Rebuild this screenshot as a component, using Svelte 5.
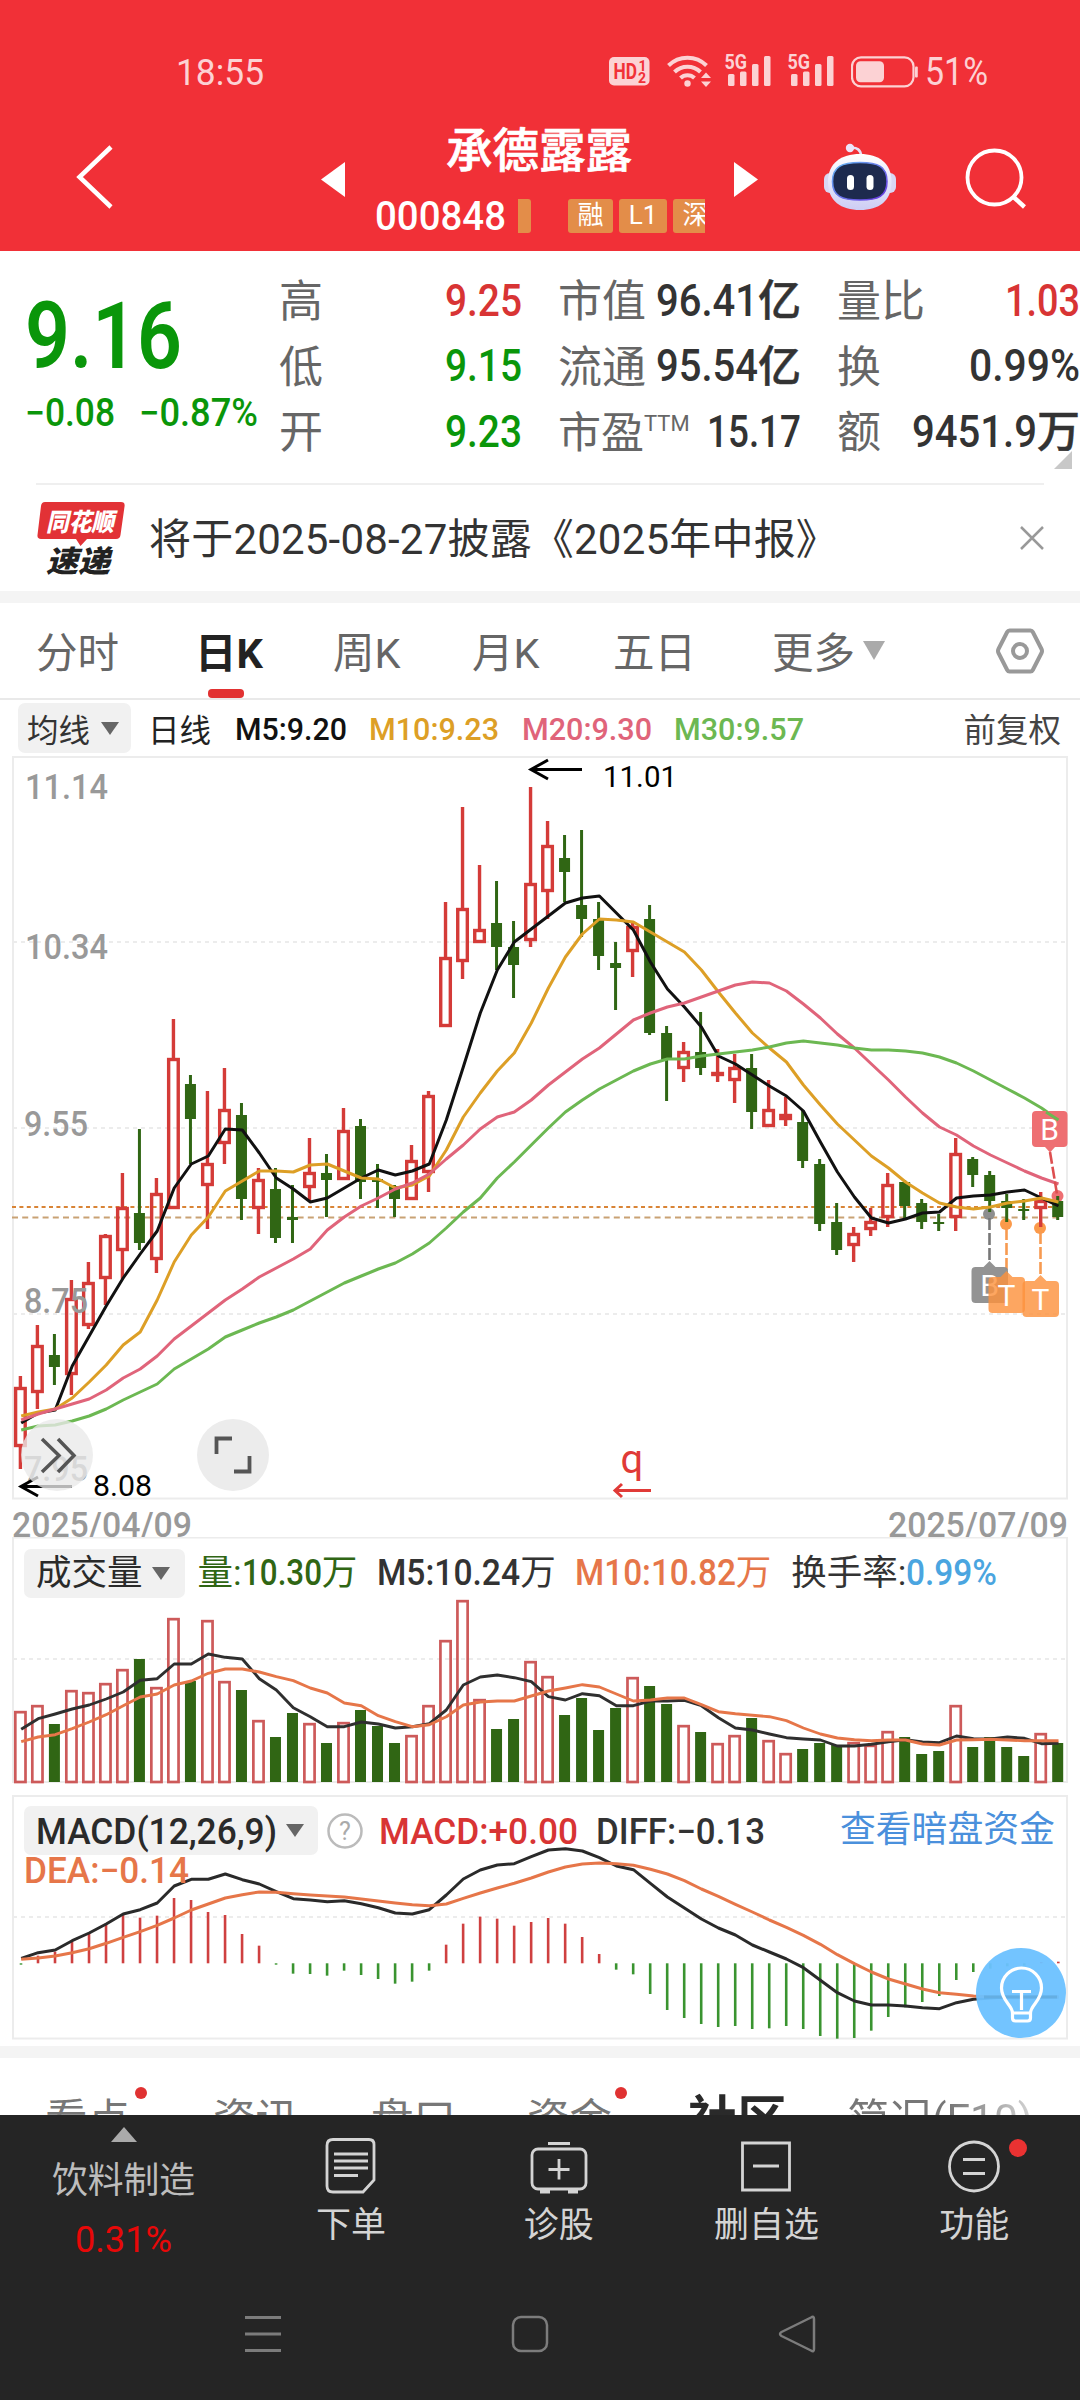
<script lang="ts">
  // Candles: [direction, high, body top, body bottom, low] in chart pixels
  type Candle = [string, number, number, number, number];
  const candles: Candle[] = [
    ['r', 1376, 1387, 1447, 1469], ['r', 1325, 1345, 1393, 1409], ['g', 1334, 1355, 1367, 1385],
    ['r', 1280, 1298, 1375, 1395], ['r', 1262, 1282, 1326, 1329], ['r', 1234, 1235, 1279, 1305],
    ['r', 1173, 1207, 1251, 1279], ['g', 1129, 1213, 1243, 1250], ['r', 1178, 1193, 1260, 1273],
    ['r', 1019, 1058, 1209, 1209], ['g', 1075, 1084, 1119, 1164], ['r', 1091, 1163, 1186, 1229],
    ['r', 1068, 1109, 1144, 1164], ['g', 1103, 1115, 1199, 1220], ['r', 1168, 1179, 1209, 1234],
    ['g', 1168, 1189, 1238, 1243], ['g', 1185, 1217, 1220, 1243], ['r', 1138, 1172, 1188, 1201],
    ['g', 1154, 1173, 1180, 1217], ['r', 1108, 1130, 1180, 1180], ['g', 1119, 1126, 1182, 1199],
    ['g', 1164, 1179, 1182, 1208], ['g', 1185, 1186, 1199, 1217], ['r', 1145, 1160, 1200, 1200],
    ['r', 1091, 1095, 1173, 1192], ['r', 902, 957, 1027, 1027], ['r', 807, 908, 962, 979],
    ['r', 865, 929, 943, 943], ['g', 881, 923, 947, 970], ['g', 921, 947, 965, 998],
    ['r', 787, 883, 941, 947], ['r', 821, 845, 892, 919], ['g', 835, 858, 872, 902],
    ['g', 830, 905, 919, 937], ['g', 902, 919, 956, 970], ['g', 942, 963, 968, 1010],
    ['r', 922, 926, 952, 977], ['g', 905, 919, 1033, 1035], ['g', 1026, 1033, 1060, 1101],
    ['r', 1042, 1051, 1069, 1082], ['g', 1012, 1052, 1068, 1075], ['r', 1049, 1072, 1076, 1082],
    ['r', 1054, 1067, 1081, 1103], ['g', 1054, 1068, 1112, 1129], ['r', 1080, 1109, 1127, 1127],
    ['r', 1097, 1114, 1120, 1126], ['g', 1110, 1122, 1161, 1168], ['g', 1159, 1164, 1224, 1231],
    ['g', 1203, 1222, 1250, 1255], ['r', 1227, 1233, 1246, 1262], ['r', 1208, 1221, 1230, 1236],
    ['r', 1173, 1184, 1218, 1227], ['g', 1180, 1182, 1206, 1220], ['g', 1199, 1203, 1222, 1229],
    ['g', 1214, 1222, 1224, 1231], ['r', 1138, 1153, 1218, 1231], ['g', 1157, 1159, 1175, 1187],
    ['g', 1171, 1175, 1201, 1212], ['g', 1194, 1201, 1208, 1222], ['g', 1199, 1209, 1211, 1220],
    ['r', 1192, 1200, 1209, 1227], ['g', 1196, 1201, 1217, 1220]
  ];

  const ma5 = [1423, 1413, 1410, 1366, 1336, 1306, 1278, 1254, 1231, 1188, 1164, 1156, 1129, 1130, 1153, 1178, 1189, 1202, 1198, 1188, 1178, 1170, 1175, 1171, 1164, 1120, 1067, 1013, 970, 942, 929, 916, 903, 898, 896, 913, 930, 962, 989, 1007, 1027, 1056, 1064, 1075, 1086, 1096, 1111, 1142, 1172, 1197, 1218, 1223, 1219, 1213, 1212, 1198, 1196, 1195, 1192, 1190, 1198, 1206];
  const ma10 = [1416, 1412, 1409, 1398, 1382, 1365, 1345, 1332, 1300, 1262, 1235, 1217, 1191, 1181, 1171, 1171, 1172, 1165, 1164, 1171, 1178, 1179, 1188, 1185, 1176, 1150, 1117, 1093, 1071, 1053, 1023, 988, 957, 934, 919, 920, 922, 932, 942, 952, 970, 992, 1013, 1033, 1048, 1062, 1085, 1105, 1124, 1140, 1156, 1168, 1182, 1193, 1203, 1207, 1209, 1207, 1203, 1201, 1198, 1202];
  const ma20 = [1420, 1414, 1409, 1404, 1399, 1390, 1378, 1369, 1356, 1339, 1326, 1313, 1300, 1289, 1277, 1268, 1259, 1249, 1230, 1217, 1206, 1198, 1189, 1183, 1174, 1159, 1145, 1129, 1117, 1112, 1100, 1085, 1072, 1059, 1048, 1034, 1020, 1013, 1007, 1003, 997, 991, 985, 982, 983, 991, 1004, 1018, 1034, 1048, 1064, 1080, 1097, 1113, 1127, 1135, 1146, 1155, 1163, 1171, 1178, 1184];
  const ma30 = [1430, 1426, 1425, 1421, 1416, 1409, 1400, 1392, 1384, 1369, 1359, 1349, 1337, 1330, 1323, 1317, 1310, 1301, 1292, 1283, 1276, 1269, 1263, 1254, 1243, 1228, 1212, 1198, 1178, 1162, 1145, 1128, 1112, 1100, 1089, 1080, 1071, 1064, 1059, 1059, 1056, 1054, 1052, 1050, 1047, 1043, 1041, 1043, 1045, 1048, 1050, 1050, 1051, 1053, 1057, 1063, 1071, 1080, 1089, 1098, 1108, 1120];

  // Volume and MACD series are stored at three units per pixel
  const volume = [545, 527, 582, 482, 488, 461, 419, 387, 473, 266, 453, 272, 455, 480, 572, 621, 549, 581, 639, 578, 540, 588, 639, 617, 527, 332, 212, 509, 597, 567, 395, 440, 555, 504, 600, 534, 443, 468, 522, 587, 606, 641, 617, 564, 632, 671, 657, 639, 645, 638, 646, 605, 621, 672, 663, 527, 651, 621, 651, 678, 611, 639];
  const vol5 = [598, 566, 552, 537, 525, 507, 486, 451, 446, 402, 402, 372, 382, 387, 446, 480, 533, 560, 590, 590, 576, 582, 594, 590, 581, 540, 465, 441, 435, 443, 455, 500, 510, 491, 497, 527, 527, 513, 513, 511, 527, 563, 594, 600, 612, 623, 627, 630, 648, 648, 643, 635, 629, 636, 638, 618, 626, 627, 621, 625, 641, 640];
  const vol10 = [635, 621, 614, 596, 576, 554, 527, 501, 492, 465, 453, 430, 417, 417, 426, 440, 452, 474, 489, 519, 527, 557, 575, 590, 584, 560, 525, 516, 513, 513, 498, 483, 474, 464, 471, 492, 513, 510, 504, 504, 524, 545, 551, 556, 560, 572, 594, 612, 624, 629, 632, 630, 630, 642, 645, 630, 629, 628, 630, 632, 632, 632];
  const macd = [524, 497, 485, 455, 429, 401, 374, 383, 377, 324, 330, 366, 375, 432, 467, 524, 551, 552, 557, 542, 555, 567, 581, 575, 542, 464, 401, 380, 386, 407, 396, 384, 401, 441, 492, 539, 553, 612, 660, 684, 702, 711, 708, 717, 715, 708, 717, 738, 746, 744, 722, 681, 652, 636, 618, 570, 546, 536, 529, 527, 516, 515];
  const diff = [505, 488, 480, 452, 429, 402, 372, 359, 339, 288, 268, 268, 252, 269, 282, 305, 326, 330, 335, 332, 341, 353, 369, 372, 359, 315, 267, 240, 225, 221, 200, 180, 176, 183, 203, 228, 239, 280, 321, 354, 387, 414, 435, 465, 486, 507, 533, 571, 608, 633, 645, 645, 648, 653, 656, 638, 628, 624, 621, 621, 621, 621];
  const dea = [508, 504, 498, 488, 476, 460, 442, 425, 406, 384, 360, 342, 324, 314, 306, 307, 311, 315, 318, 321, 327, 333, 339, 344, 347, 342, 325, 309, 294, 280, 264, 246, 231, 222, 219, 221, 226, 238, 252, 272, 297, 319, 343, 366, 390, 412, 436, 463, 494, 521, 546, 567, 582, 597, 608, 613, 618, 620, 620, 621, 621, 621];

  const cx = (i: number) => 20.4 + 17.005 * i;
  const line = (ys: number[], base = 0, k = 1) =>
    ys.map((y, i) => `${(cx(i) + 0.8).toFixed(1)},${(base + y / k).toFixed(1)}`).join(' ');
</script>

<!-- Condensed numeral label; its box is exactly the digit height -->
{#snippet num(text: string, w: number, size: number, cls: string)}
  <svg class="num {cls}" width={w} height={size * 0.715}>
    <text x="0" y={size * 0.715} font-size={size} textLength={w} lengthAdjust="spacingAndGlyphs">{text}</text>
  </svg>
{/snippet}

{#snippet signal()}
  <svg class="signal" width="48" height="34" viewBox="724 53 48 34" fill="currentColor">
    <text x="724.5" y="69" font-size="20" font-weight="700" textLength="22.5" lengthAdjust="spacingAndGlyphs">5G</text>
    <rect x="728" y="74" width="6.5" height="12" rx="1.5" />
    <rect x="740" y="71.5" width="6.5" height="14.5" rx="1.5" />
    <rect x="752" y="64" width="6.5" height="22" rx="1.5" />
    <rect x="764" y="56" width="6.5" height="30" rx="1.5" />
  </svg>
{/snippet}

<div class="screen">
  <header>
    <div class="status">
      {@render num('18:55', 88, 37.5, 'clock')}
      <svg class="hd" width="41" height="29" viewBox="0 0 41 29">
        <rect width="40.5" height="28.5" rx="5" fill="currentColor" />
        <g fill="#f13037" font-weight="700">
          <text x="4.500" y="22" font-size="22" textLength="23.500" lengthAdjust="spacingAndGlyphs">HD</text>
          <text x="29.500" y="14" font-size="14">1</text>
          <text x="29" y="26" font-size="14">2</text>
        </g>
      </svg>
      <svg class="wifi" width="46" height="36" viewBox="666 52 46 36" fill="none" stroke="currentColor" stroke-width="4">
        <path d="M668.500 65.500a27 27 0 0 1 38 0M674.500 72a18.500 18.500 0 0 1 26 0M680.500 78a10 10 0 0 1 14 0" />
        <circle cx="687.500" cy="83.500" r="3.200" fill="currentColor" stroke="none" />
        <path d="M701 78l5-5.500 5 5.500zM701 81.500l5 5.500 5-5.500z" fill="currentColor" stroke="none" />
      </svg>
      {@render signal()}
      {@render signal()}
      <svg class="battery" width="68" height="32" viewBox="850 55.500 68 32">
        <rect x="851" y="56.800" width="61.500" height="29" rx="9" fill="none" stroke="currentColor" stroke-width="2.200" />
        <rect x="855" y="60.800" width="28" height="21" rx="4.500" fill="currentColor" />
        <rect x="914" y="66" width="2.800" height="11" rx="1" fill="currentColor" />
      </svg>
      {@render num('51%', 63, 38, 'level')}
    </div>
    <div class="titlebar">
      <svg class="back" width="40" height="66" viewBox="75 143 40 66" fill="none" stroke="#fff" stroke-width="4.500">
        <path d="M111 146L79.500 176L111 206" />
      </svg>
      <svg class="prev" width="24" height="35" viewBox="0 0 24 35"><path d="M24 0v35L0 17.500z" fill="#fff" /></svg>
      <div class="title">
        <h1>承德露露</h1>
        <div class="code">
          {@render num('000848', 131, 40.5, 'w5')}
          <div class="badges">
            <i class="badge cut"></i>
            <i class="badge first">融</i>
            <i class="badge l1">L1</i>
            <i class="badge">深</i>
          </div>
        </div>
      </div>
      <svg class="next" width="24" height="35" viewBox="0 0 24 35"><path d="M0 0v35L24 17.500z" fill="#fff" /></svg>
      <svg class="robot" width="76" height="70" viewBox="823 141 76 70">
        <defs>
          <linearGradient id="shell" x1="0" y1="0" x2="0" y2="1">
            <stop offset="0" stop-color="#fff" /><stop offset="1" stop-color="#cdcdf4" />
          </linearGradient>
          <linearGradient id="rim" x1="0" y1="0" x2="1" y2="1">
            <stop offset="0" stop-color="#66b8f4" /><stop offset="1" stop-color="#6a35e0" />
          </linearGradient>
        </defs>
        <path d="M851 147c7-1 11 2 11 8" fill="none" stroke="#e8e0f6" stroke-width="2.600" />
        <circle cx="851" cy="147" r="4.200" fill="#ece4fa" />
        <rect x="825" y="172" width="72" height="20" rx="6" fill="#d9d7f4" />
        <path d="M861 153c19 0 31.500 9 31.500 28S880 209 861 209s-32-9-32-28 13-28 32-28z" fill="url(#shell)" />
        <path d="M861 161.500c18 0 27 4 27 19s-9 18.500-27 18.500-27.500-3.500-27.500-18.500 9.500-19 27.500-19z" fill="#1d2a4e" stroke="url(#rim)" stroke-width="1.600" />
        <rect x="848" y="174" width="7" height="15" rx="3.500" fill="#fff" />
        <rect x="867.500" y="174" width="7" height="15" rx="3.500" fill="#fff" />
      </svg>
      <svg class="search" width="62" height="62" viewBox="964 148 62 62" fill="none" stroke="#fff" stroke-width="3.800">
        <circle cx="994.500" cy="177.500" r="27" />
        <path d="M1013.500 197l11 10" stroke-width="4.400" />
      </svg>
    </div>
  </header>

  <section class="quote">
    <div class="price">
      {@render num('9.16', 157, 92, 'w6 green')}
      <div class="change">
        {@render num('−0.08', 90, 38, 'w5 green')}
        {@render num('−0.87%', 119, 38, 'w5 green')}
      </div>
    </div>
    <dl class="c1">
      <div><dt>高</dt>{@render num('9.25', 77, 45, 'w5 red')}</div>
      <div><dt>低</dt>{@render num('9.15', 77, 45, 'w5 green')}</div>
      <div><dt>开</dt>{@render num('9.23', 77, 45, 'w5 green')}</div>
    </dl>
    <dl class="c2">
      <div><dt>市值</dt><dd>{@render num('96.41', 102, 45, 'w5')}亿</dd></div>
      <div><dt>流通</dt><dd>{@render num('95.54', 102, 45, 'w5')}亿</dd></div>
      <div><dt class="pe">市盈<sup>TTM</sup></dt>{@render num('15.17', 94, 45, 'w5')}</div>
    </dl>
    <dl class="c3">
      <div><dt>量比</dt>{@render num('1.03', 75, 45, 'w5 red')}</div>
      <div><dt>换</dt>{@render num('0.99%', 111, 45, 'w5')}</div>
      <div><dt>额</dt><dd>{@render num('9451.9', 125, 45, 'w5')}万</dd></div>
      <i class="corner"></i>
    </dl>
  </section>

  <section class="notice">
    <svg class="logo" width="90" height="74" viewBox="0 0 90 74">
      <path d="M8 1H84q4 0 3.600 4L83.500 34q-.5 4-4.500 4H50l-6.500 7L39 38H4Q0 38 .5 34L4 5q.5-4 4-4z" fill="#e23236" />
      <g font-weight="900" font-style="italic">
        <text x="9" y="30" font-size="25" fill="#fff" textLength="68" lengthAdjust="spacingAndGlyphs">同花顺</text>
        <text x="9" y="71" font-size="30" fill="#222" textLength="64" lengthAdjust="spacingAndGlyphs">速递</text>
      </g>
    </svg>
    <p>将于2025-08-27披露《2025年中报》</p>
    <svg class="close" width="24" height="24" viewBox="0 0 24 24" stroke="#999" stroke-width="2.500"><path d="M1 1l22 22M23 1L1 23" /></svg>
  </section>

  <nav class="periods">
    <span class="p1">分时</span>
    <span class="p2 on">日K</span>
    <span class="p3">周K</span>
    <span class="p4">月K</span>
    <span class="p5">五日</span>
    <span class="p6">更多</span>
    <svg class="caret" width="22" height="19" viewBox="0 0 22 19"><path d="M0 0h22L11 19z" fill="#aaa" /></svg>
    <svg class="hex" width="50" height="48" viewBox="0 0 50 48" fill="none" stroke="#999" stroke-width="4">
      <path d="M14.500 3.500h21q1.500 0 2.300 1.500L46.500 22q1 2 0 4L37.800 43q-.8 1.500-2.300 1.500h-21q-1.500 0-2.300-1.500L3.500 26q-1-2 0-4L12.200 5q.8-1.500 2.300-1.500z" />
      <circle cx="25" cy="24" r="7" />
    </svg>
  </nav>

  <div class="averages">
    <div class="pill">均线<svg width="18" height="13" viewBox="0 0 18 13"><path d="M0 0h18L9 13z" fill="#666" /></svg></div>
    <span class="kind">日线</span>
    {@render num('M5:9.20', 112, 31.5, 'w5 m5')}
    {@render num('M10:9.23', 130, 31.5, 'w5 m10')}
    {@render num('M20:9.30', 130, 31.5, 'w5 m20')}
    {@render num('M30:9.57', 130, 31.5, 'w5 m30')}
    <span class="adj">前复权</span>
  </div>

  <svg class="chart" width="1080" height="781" viewBox="0 756 1080 781">
    <g fill="none" stroke="#ececec" stroke-width="2">
      <rect x="13" y="757" width="1054" height="741.500" />
      <g stroke-dasharray="4 4"><path d="M13 942h1054M13 1128h1054M13 1314h1054" /></g>
    </g>
    <path d="M12 1207h1050" stroke="#d98436" stroke-width="2.200" stroke-dasharray="4 3.400" />
    <path d="M12 1217.500h1050" stroke="#c9a274" stroke-width="2.200" stroke-dasharray="6 4.200" />
    <g>
      <circle cx="989" cy="1214" r="6" fill="#8e8e8e" />
      <circle cx="1006" cy="1224" r="6" fill="#fb9a4a" />
      <circle cx="1040" cy="1228" r="6" fill="#fb9a4a" />
      <circle cx="1057.500" cy="1196" r="6" fill="#ee6f72" />
    </g>
    {#each candles as [c, hi, top, bot, lo], i}
      {#if c === 'g'}
        <g fill="#306614">
          <rect x={cx(i) - 1.5} y={hi} width="3" height={lo - hi} />
          <rect x={cx(i) - 5.5} y={top} width="11" height={bot - top} />
        </g>
      {:else}
        <g fill="none" stroke="#d43b38" stroke-width="3.400">
          {#if top > hi}<path d="M{cx(i)} {hi}V{top + 1}" />{/if}
          {#if lo > bot}<path d="M{cx(i)} {bot - 1}V{lo}" />{/if}
          <rect x={cx(i) - 4.8} y={top + 1.5} width="9.6" height={Math.max(bot - top - 3, 1)} />
        </g>
      {/if}
    {/each}
    <g fill="none" stroke-width="3" stroke-linejoin="round">
      <polyline points={line(ma5)} stroke="#111" />
      <polyline points={line(ma10)} stroke="#dd9f26" />
      <polyline points={line(ma20)} stroke="#e0647a" />
      <polyline points={line(ma30)} stroke="#6cb852" />
    </g>
    <g class="axis" font-size="35">
      <text x="25" y="799" textLength="83" lengthAdjust="spacingAndGlyphs">11.14</text>
      <text x="25" y="959" textLength="83" lengthAdjust="spacingAndGlyphs">10.34</text>
      <text x="24" y="1136" textLength="64" lengthAdjust="spacingAndGlyphs">9.55</text>
      <text x="24" y="1313" textLength="64" lengthAdjust="spacingAndGlyphs">8.75</text>
      <text x="24" y="1481" textLength="64" lengthAdjust="spacingAndGlyphs">7.95</text>
      <text x="12" y="1536.500" font-size="34.500" textLength="180" lengthAdjust="spacingAndGlyphs">2025/04/09</text>
      <text x="888" y="1536.500" font-size="34.500" textLength="180" lengthAdjust="spacingAndGlyphs">2025/07/09</text>
    </g>
    <g fill="none" stroke="#000" stroke-width="3">
      <path d="M582 769.500H532M548 760l-17 9.500 17 9.500" />
      <path d="M72 1486.500H22M38 1477l-17 9.500 17 9.500" />
    </g>
    <text x="603" y="787" font-size="30" textLength="74" lengthAdjust="spacingAndGlyphs">11.01</text>
    <text x="93" y="1495.500" font-size="30" textLength="59" lengthAdjust="spacingAndGlyphs">8.08</text>
    <path d="M651 1490.500h-35M622 1484l-7 6.500 7 6.500" stroke="#e03a37" stroke-width="3" fill="none" />
    <text x="620.500" y="1472.500" class="ex" font-size="40">q</text>
    <g>
      <circle cx="57" cy="1455" r="36" fill="#e9e9e9" fill-opacity=".78" />
      <path d="M42 1439l17 16.500-17 16.500M58 1439l16 16.500-16 16.500" fill="none" stroke="#555" stroke-width="3.500" />
      <circle cx="233" cy="1455" r="36" fill="#ececec" />
      <path d="M216.500 1454v-15.500H232M234 1471.500h15.500V1456" fill="none" stroke="#555" stroke-width="3.800" />
    </g>
    <g fill="none" stroke-width="2.600" stroke-dasharray="12 3">
      <path d="M989.500 1218v43" stroke="#777" />
      <path d="M1006.500 1228v45" stroke="#f79a50" />
      <path d="M1040.500 1232v45" stroke="#f79a50" />
      <path d="M1050 1152l7 42" stroke="#dd4f50" />
    </g>
    <g class="tag">
      <path d="M1036 1111h27.500q4 0 4 4v28q0 4-4 4h-8.500l-5 5.500-5-5.500h-9q-4 0-4-4v-28q0-4 4-4z" fill="#ee6f72" />
      <text x="1049.700" y="1140">B</text>
      <path d="M975.500 1267h8l6-6 6 6h8.500q4 0 4 4v28q0 4-4 4h-28.500q-4 0-4-4v-28q0-4 4-4z" fill="#8d8d8d" fill-opacity=".95" />
      <text x="989.500" y="1296">B</text>
      <path d="M992.500 1277h8l6-6 6 6h8.500q4 0 4 4v28q0 4-4 4h-28.500q-4 0-4-4v-28q0-4 4-4z" fill="#fd923e" fill-opacity=".82" />
      <text x="1006.500" y="1306">T</text>
      <path d="M1026.500 1281h8l6-6 6 6h8.500q4 0 4 4v28q0 4-4 4h-28.500q-4 0-4-4v-28q0-4 4-4z" fill="#fd923e" fill-opacity=".82" />
      <text x="1040.500" y="1310">T</text>
    </g>
    <polyline points="1046,1112 1058.500,1120" fill="none" stroke="#6cb852" stroke-width="3" />
  </svg>

  <section class="panel volume">
    <svg width="1080" height="258" viewBox="0 1537 1080 258">
      <path d="M13 1782V1537.500H1067V1782z" fill="none" stroke="#ececec" stroke-width="2" />
      <path d="M13 1659h1054" stroke="#ececec" stroke-width="2" stroke-dasharray="4 4" />
      {#each volume as v, i}
        {#if candles[i][0] === 'g'}
          <rect x={cx(i) - 5.5} y={1530 + v / 3} width="11" height={252 - v / 3} fill="#306614" />
        {:else}
          <rect x={cx(i) - 5.1} y={1530 + v / 3 + 0.5} width="10.2" height={251.5 - v / 3} fill="none" stroke="#cd5a5a" stroke-width="2.7" />
        {/if}
      {/each}
      <g fill="none" stroke-width="2.900" stroke-linejoin="round">
        <polyline points={line(vol5, 1530, 3)} stroke="#2f2f2f" />
        <polyline points={line(vol10, 1530, 3)} stroke="#e67649" />
      </g>
    </svg>
    <div class="legend">
      <div class="pill">成交量<svg width="18" height="13" viewBox="0 0 18 13"><path d="M0 0h18L9 13z" fill="#666" /></svg></div>
      <span class="v1">量:{@render num('10.30', 80, 36, 'w5')}万</span>
      <span class="v2">{@render num('M5:10.24', 143, 36, 'w5')}万</span>
      <span class="v3">{@render num('M10:10.82', 161, 36, 'w5')}万</span>
      <span class="v4">换手率:{@render num('0.99%', 91, 36, 'w5 blue')}</span>
    </div>
  </section>

  <section class="panel macd">
    <svg width="1080" height="251" viewBox="0 1795 1080 251">
      <rect x="13" y="1796" width="1054" height="242.500" fill="none" stroke="#ececec" stroke-width="2" />
      <path d="M13 1917h1054" stroke="#ececec" stroke-width="2" stroke-dasharray="4 4" />
      {#each macd as m, i}
        <path d="M{cx(i) + 0.6} 1963.300V{1790 + m / 3}" stroke={m < 520 ? '#cf4040' : '#3a9430'} stroke-width="2.600" />
      {/each}
      <g fill="none" stroke-width="3" stroke-linejoin="round">
        <polyline points={line(diff, 1790, 3)} stroke="#2a2a2a" />
        <polyline points={line(dea, 1790, 3)} stroke="#e67649" />
      </g>
      <circle cx="1021" cy="1993" r="45" fill="#6bc1ff" fill-opacity=".95" />
      <path d="M984 1997h73" stroke="#559fd0" stroke-opacity=".5" stroke-width="3" />
      <g fill="none" stroke="#fff" stroke-width="3.200" stroke-linejoin="round">
        <path d="M1012.500 2013c0-8-11-12-11-25a20 20 0 0 1 40 0c0 13-11 17-11 25zM1012.500 2013v5q0 3 3 3h12q3 0 3-3v-5" />
        <path d="M1012 1991.500h19M1021.500 1991.500V2010" />
      </g>
    </svg>
    <div class="legend">
      <div class="pill">{@render num('MACD(12,26,9)', 241, 36, 'w5')}<svg width="18" height="13" viewBox="0 0 18 13"><path d="M0 0h18L9 13z" fill="#666" /></svg></div>
      <svg class="help" width="36" height="36" viewBox="0 0 36 36">
        <circle cx="18" cy="18" r="16.500" fill="none" stroke="#bbb" stroke-width="2.500" />
        <text x="18" y="27" text-anchor="middle" font-size="25" fill="#aaa">?</text>
      </svg>
      {@render num('MACD:+0.00', 199, 36, 'w5 red')}
      {@render num('DIFF:−0.13', 169, 36, 'w5 diff')}
      <span class="link">查看暗盘资金</span>
    </div>
    <div class="dea">{@render num('DEA:−0.14', 165, 36, 'w5')}</div>
  </section>

  <nav class="topics">
    <span class="t1">看点<i></i></span>
    <span class="t2">资讯</span>
    <span class="t3">盘口</span>
    <span class="t4">资金<i></i></span>
    <span class="t5">社区</span>
    <span class="t6">简况(F10)</span>
  </nav>

  <footer>
    <div class="actions">
      <div class="sector">
        <svg width="26" height="15" viewBox="0 0 26 15"><path d="M13 0l13 15H0z" fill="#aaa" /></svg>
        <span>饮料制造</span>
        {@render num('0.31%', 97, 37, '')}
      </div>
      <div class="act">
        <svg width="60" height="58" viewBox="0 0 60 58" fill="none" stroke="#d4d4d4" stroke-width="2.800">
          <path d="M12 2.500h36q5 0 5 5V43L42 55H12q-6 0-6-6V8.500q0-6 6-6z" />
          <path d="M13 17h34M13 24h34M13 31h34M13 38.500h24" />
        </svg>
        <span>下单</span>
      </div>
      <div class="act">
        <svg width="60" height="58" viewBox="0 0 60 58" fill="none" stroke="#d4d4d4" stroke-width="2.800">
          <rect x="3" y="12" width="54" height="40" rx="6" />
          <path d="M19 6.500h22M30 22v20.500M19.500 32.500h21" />
          <path d="M11 54.500h10M39 54.500h10" stroke-width="4" />
        </svg>
        <span>诊股</span>
      </div>
      <div class="act">
        <svg width="60" height="58" viewBox="0 0 60 58" fill="none" stroke="#d4d4d4" stroke-width="2.800">
          <path d="M6.500 6h47v47h-47zM17 29h26" />
        </svg>
        <span>删自选</span>
      </div>
      <div class="act">
        <svg width="60" height="58" viewBox="0 0 60 58" fill="none" stroke="#d4d4d4" stroke-width="2.800">
          <circle cx="30" cy="29.500" r="24.500" />
          <path d="M19 22.500h22M19 36.500h22" />
        </svg>
        <span>功能</span>
        <i></i>
      </div>
    </div>
    <div class="sysnav">
      <svg width="38" height="38" viewBox="0 0 38 38" stroke="#7c7c7c" stroke-width="2.800"><path d="M1 2.500h36M1 19h36M1 35.500h36" /></svg>
      <svg width="38" height="38" viewBox="0 0 38 38" fill="none" stroke="#7c7c7c" stroke-width="2.500"><rect x="2" y="2" width="34" height="34" rx="8" /></svg>
      <svg width="38" height="38" viewBox="0 0 38 38" fill="none" stroke="#7c7c7c" stroke-width="2.500" stroke-linejoin="round"><path d="M33 2.500Q36 .5 36 4v30q0 3.500-3 1.500L3.500 21q-3-2 0-4z" /></svg>
    </div>
  </footer>
</div>

<style>
  :global(body) { margin: 0; background: #fff; }
  .screen {
    width: 1080px; height: 2400px; overflow: hidden; background: #fff; color: #333;
    display: flex; flex-direction: column;
    font-family: Roboto, 'Noto Sans CJK SC', sans-serif;
  }
  .screen > * { flex: none; box-sizing: border-box; }
  svg { display: block; flex: none; }
  svg text { font-family: Roboto, 'Noto Sans CJK SC', sans-serif; }
  .num { overflow: visible; fill: currentColor; }
  .w5 { font-weight: 500; }
  .w6 { font-weight: 600; }
  .green { color: #0a960a; }
  .red { color: #d83434; }
  .blue { color: #4aa5e0; }

  header { height: 251px; background: #f13037; color: #fff; padding-top: 50px; }
  .status { height: 43px; display: flex; align-items: center; color: #fcd2d4; padding-left: 176px; }
  .hd { margin-left: 345px; }
  .wifi { margin-left: 16px; margin-top: -3px; }
  .signal { margin: -3px 3px 0 12px; overflow: visible; }
  .battery { margin-left: 13px; }
  .level { margin-left: 6px; }
  .titlebar { height: 158px; padding-top: 9px; box-sizing: border-box; display: flex; align-items: center; }
  .back { margin-left: 75px; }
  .prev { margin: 5px 0 0 206px; }
  .title { width: 330px; margin: 4px 0 0 30px; display: flex; flex-direction: column; align-items: center; gap: 22px; }
  h1 { margin: 0; padding-right: 2px; font-size: 46.5px; line-height: 52px; font-weight: 500; -webkit-text-stroke: 0.7px currentColor; }
  .code { display: flex; align-items: center; width: 330px; height: 34px; }
  .badges { display: flex; width: 187px; height: 34px; margin-left: 12px; overflow: hidden; gap: 6px; }
  .badge {
    flex: none; width: 45px; height: 34px; line-height: 33px; border-radius: 3px; background: #e38d49;
    font-size: 26px; font-style: normal; text-align: center;
  }
  .cut { width: 13px; border-radius: 0 3px 3px 0; }
  .first { margin-left: 31px; }
  .l1 { width: 48px; }
  .next { margin: 5px 0 0 29px; }
  .robot { margin-left: 64px; }
  .search { margin: 4px 0 0 66px; }

  .quote { height: 232px; display: flex; align-items: flex-start; }
  .price { width: 279px; box-sizing: border-box; padding: 51px 0 0 25px; }
  .change { display: flex; gap: 24px; margin-top: 31px; }
  dl { margin: 18px 0 0; line-height: 65.5px; position: relative; }
  dl div { display: flex; justify-content: space-between; align-items: baseline; height: 65.5px; }
  dt { color: #666; font-size: 44px; white-space: nowrap; position: relative; top: 1px; }
  dd { margin: 0; font-weight: 500; display: flex; align-items: baseline; font-size: 43px; -webkit-text-stroke: 0.5px currentColor; }
  dd .num { -webkit-text-stroke: 0; }
  sup { font-size: 22px; line-height: 0; vertical-align: 17px; }
  .pe { font-size: 43px; }
  .c1 { width: 243px; }
  .c2 { width: 243px; margin-left: 36px; }
  .c3 { width: 243px; margin-left: 36px; }
  .corner { position: absolute; right: 8px; top: 182px; border: 9px solid; border-color: transparent #c8c8c8 #c8c8c8 transparent; }

  .notice { height: 108px; margin: 0 36px; border-top: 2px solid #efefef; display: flex; align-items: center; }
  .logo { margin: -1px 0 0 1px; }
  .notice p { margin: 3px 0 0 22px; font-size: 42px; letter-spacing: 0.2px; line-height: 50px; flex: 1; white-space: nowrap; }

  .periods {
    height: 109px; border-top: 12px solid #f4f4f4; border-bottom: 2px solid #e9e9e9;
    display: flex; align-items: center; font-size: 41.5px; color: #666; white-space: nowrap; padding-left: 36px;
  }
  .periods span { height: 95px; line-height: 101px; position: relative; }
  .p1 { width: 159px; }
  .p2 { width: 138px; }
  .p3 { width: 139px; }
  .p4 { width: 141px; }
  .p5 { width: 159px; }
  .p6 { width: 91px; }
  .on { color: #222; font-weight: 700; }
  .on::after { content: ''; position: absolute; left: 13px; bottom: 0; width: 36px; height: 9px; border-radius: 4px; background: #e23232; }
  .hex { margin-left: 110px; }

  .averages { height: 56px; display: flex; align-items: center; font-size: 31.5px; padding-left: 18px; color: #333; white-space: nowrap; }
  .pill { display: flex; align-items: center; background: #f1f1f1; border-radius: 7px; box-sizing: border-box; }
  .averages .pill { width: 113px; height: 50px; padding-left: 9px; gap: 11px; }
  .kind { margin-left: 17px; width: 87px; color: #222; }
  .m5 { color: #111; }
  .m10 { color: #dd9f26; margin-left: 22px; }
  .m20 { color: #e0647a; margin-left: 23px; }
  .m30 { color: #6cb852; margin-left: 22px; }
  .adj { margin: -2px 0 0 auto; padding-right: 19px; font-size: 32.5px; color: #444; }
  .chart { fill: #000; }
  .axis { fill: #999; font-weight: 500; }
  .ex { fill: #e03a37; }
  .tag text { fill: #fff; font-size: 30px; text-anchor: middle; }

  .panel { position: relative; }
  .legend { position: absolute; left: 24px; top: 11px; display: flex; align-items: center; white-space: nowrap; font-size: 35.5px; color: #333; }
  .legend .pill { height: 49px; padding: 0 15px 0 12px; gap: 9px; color: #2a2a2a; line-height: 51px; }
  .legend > span { display: flex; align-items: baseline; line-height: 51px; }
  .macd .pill { padding-right: 14px; }
  .v1 { margin-left: 13px; color: #306614; }
  .v2 { margin-left: 20px; }
  .v3 { margin-left: 19px; color: #e67649; }
  .v4 { margin-left: 20px; }
  .help { margin: 0 16px 0 9px; }
  .diff { margin-left: 18px; }
  .macd .link { position: absolute; left: 816px; color: #4a90dc; font-size: 35.8px; }
  .dea { position: absolute; left: 24px; top: 62px; color: #e67649; }

  .topics {
    height: 69px; border-top: 12px solid #f4f4f4; overflow: hidden; display: flex; align-items: flex-start;
    font-size: 42.5px; line-height: 56px; color: #777; padding: 34px 0 0 45px; white-space: nowrap;
  }
  .topics span { position: relative; }
  .topics i { position: absolute; left: 90px; top: -5px; width: 12px; height: 12px; border-radius: 50%; background: #e03232; }
  .topics .t4 i { left: 88px; }
  .t1 { width: 168px; }
  .t2 { width: 158px; }
  .t3 { width: 156px; }
  .t4 { width: 161px; }
  .t5 { width: 159px; font-size: 49.5px; font-weight: 700; color: #2a2a2a; }
  .t6 { background: linear-gradient(90deg, #777 55%, #d5d5d5); background-clip: text; color: transparent; }

  footer { height: 285px; background: #252525; color: #d4d4d4; }
  .actions { display: flex; height: 160px; }
  .sector { width: 247px; display: flex; flex-direction: column; align-items: center; padding-top: 12px; color: #bdbdbd; font-size: 35.8px; }
  .sector span { line-height: 44px; margin: 17px 0 23px; }
  .sector .num { color: #e80808; }
  .act { width: 207.8px; position: relative; display: flex; flex-direction: column; align-items: center; padding-top: 22px; font-size: 35px; line-height: 44px; }
  .act span { margin-top: 9px; }
  .act i { position: absolute; right: 51px; top: 24px; width: 18px; height: 18px; border-radius: 50%; background: #ea3232; }
  .sysnav { display: flex; gap: 229px; padding: 40px 0 0 244px; }
</style>
